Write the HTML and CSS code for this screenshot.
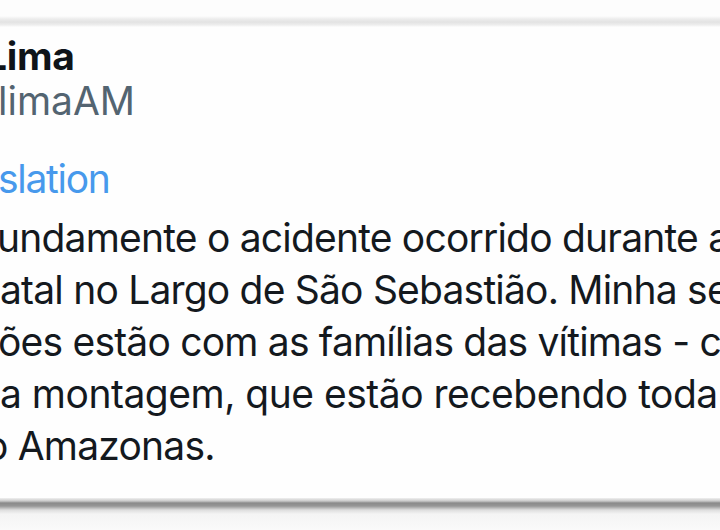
FILE: index.html
```html
<!DOCTYPE html>
<html lang="pt">
<head>
<meta charset="utf-8">
<title>Wilson Lima</title>
<link rel="stylesheet" href="styles.css">
</head>
<body>
<div class="edge-top"></div>
<article class="card">
  <header class="author">
    <div class="name"><span class="cut-name">Lima</span></div>
    <div class="handle"><span class="cut-handle">limaAM</span></div>
  </header>
  <div class="translate"><span class="cut-translate">slation</span></div>
  <div class="body">
    <div class="line l1">undamente o acidente ocorrido durante a montagem</div>
    <div class="line l2">atal no Largo de São Sebastião. Minha sentida solidariedade</div>
    <div class="line l3">ões estão com as famílias das vítimas - colaboradores</div>
    <div class="line l4">a montagem, que estão recebendo toda a assistência</div>
    <div class="line l5">o Amazonas.</div>
  </div>
</article>
<div class="edge-bottom"></div>
</body>
</html>
```

FILE: styles.css
```css
html, body {
  margin: 0;
  padding: 0;
}
body {
  width: 720px;
  height: 530px;
  overflow: hidden;
  background: #fafafa;
  font-family: "Inter", "Noto Sans", sans-serif;
  color: #0f1419;
}
.edge-top {
  height: 27px;
  background: linear-gradient(to bottom, #fdfdfd 0, #fdfdfd 16px, #ededed 19px, #e3e3e3 22px, #eeeeee 25px, #fdfdfd 27px);
}
.card {
  height: 471px;
  box-sizing: border-box;
  padding-top: 6px;
  background: #fefefe;
  overflow: hidden;
  white-space: nowrap;
}
.edge-bottom {
  height: 32px;
  background: linear-gradient(to bottom, #f0f0f0 0, #c9c9c9 3px, #8a8a8a 5px, #969696 8px, #dedede 12px, #f4f4f4 16px, #fafafa 32px);
}
.name {
  font-size: 39px;
  line-height: 45px;
  font-weight: 700;
  height: 45px;
  letter-spacing: -0.3px;
}
.cut-name {
  display: inline-block;
  margin-left: -15px;
}
.handle {
  font-size: 39px;
  line-height: 45px;
  color: #536471;
  height: 45px;
}
.cut-handle {
  display: inline-block;
  margin-left: -2px;
}
.translate {
  margin-top: 30px;
  font-size: 39px;
  line-height: 52px;
  color: #4799ec;
  letter-spacing: -1.3px;
}
.cut-translate {
  display: inline-block;
  margin-left: -2px;
}
.body {
  margin-top: 7px;
  font-size: 39px;
  line-height: 52px;
  letter-spacing: -0.8px;
  color: #14191e;
}
.line { height: 52px; }
.l1 { margin-left: -3px; }
.l2 { margin-left: 0; }
.l3 { margin-left: -2px; }
.l4 { margin-left: 0; letter-spacing: -0.5px; }
.l5 { margin-left: -15px; }
```
